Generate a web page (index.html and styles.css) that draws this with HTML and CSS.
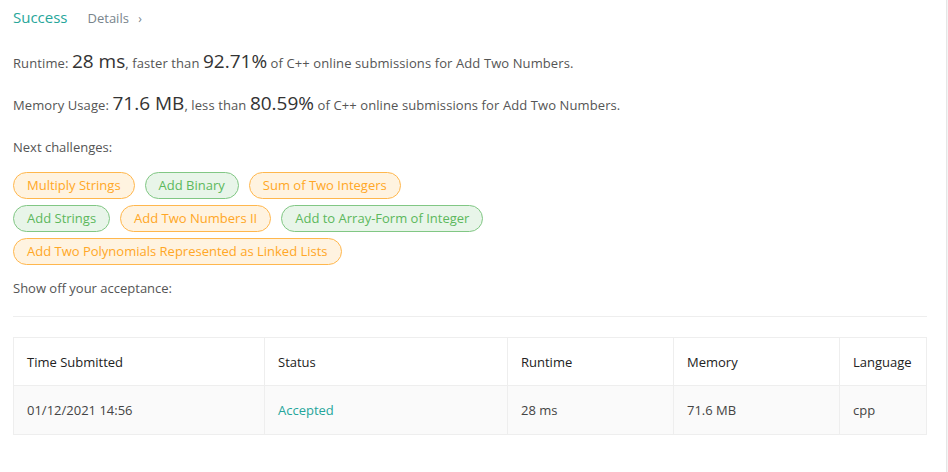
FILE: index.html
```html
<!DOCTYPE html>
<html>
<head>
<meta charset="utf-8">
<link rel="stylesheet" href="styles.css">
</head>
<body>
<div class="page">
  <div class="head">
    <span class="success">Success</span>
    <span class="details">Details <span class="chev">›</span></span>
  </div>
  <p class="stat">Runtime: <span class="big">28 ms</span>, faster than <span class="big">92.71%</span> of C++ online submissions for Add Two Numbers.</p>
  <p class="stat">Memory Usage: <span class="big">71.6 MB</span>, less than <span class="big">80.59%</span> of C++ online submissions for Add Two Numbers.</p>
  <p class="label">Next challenges:</p>
  <div class="tags">
    <span class="tag medium">Multiply Strings</span>
    <span class="tag easy">Add Binary</span>
    <span class="tag medium">Sum of Two Integers</span>
    <span class="tag easy">Add Strings</span>
    <span class="tag medium">Add Two Numbers II</span>
    <span class="tag easy">Add to Array-Form of Integer</span>
    <span class="tag medium">Add Two Polynomials Represented as Linked Lists</span>
  </div>
  <p class="label show">Show off your acceptance:</p>
  <hr class="rule">
  <table class="subs">
    <thead>
      <tr><th class="c1">Time Submitted</th><th class="c2">Status</th><th class="c3">Runtime</th><th class="c4">Memory</th><th class="c5">Language</th></tr>
    </thead>
    <tbody>
      <tr><td>01/12/2021 14:56</td><td class="acc">Accepted</td><td>28 ms</td><td>71.6 MB</td><td>cpp</td></tr>
    </tbody>
  </table>
</div>
</body>
</html>
```
FILE: styles.css
```css
html, body {
  margin: 0;
  padding: 0;
}
body {
  background: #f4f4f4;
  font-family: "Open Sans", "Noto Sans", sans-serif;
  font-size: 13px;
  color: #555;
}
.page {
  width: 947px;
  height: 472px;
  box-sizing: border-box;
  background: #fff;
  border-right: 1px solid #e6e6e6;
  padding: 7px 20px 0 13px;
}
.head {
  display: flex;
  align-items: baseline;
  gap: 20px;
  height: 24px;
}
.success {
  font-size: 15px;
  color: #26a69a;
}
.details {
  color: #78848c;
  font-size: 13px;
}
.chev {
  margin-left: 6px;
  font-size: 12px;
}
.stat {
  margin: 0;
  height: 42px;
  line-height: 30px;
  letter-spacing: 0.1px;
}
.stat:first-of-type {
  margin-top: 15px;
}
.big {
  font-size: 19px;
  color: #333;
  letter-spacing: 0;
}
.label {
  margin: 7px 0 0;
  line-height: 20px;
}
.tags {
  display: flex;
  flex-wrap: wrap;
  gap: 6px 10px;
  margin-top: 15px;
  width: 490px;
}
.tag {
  height: 27px;
  box-sizing: border-box;
  line-height: 25px;
  padding: 0 13px;
  border-radius: 14px;
  border: 1px solid;
  font-size: 13px;
}
.medium {
  color: #ffa726;
  background: #fff3e0;
  border-color: #ffb74d;
}
.easy {
  color: #5cb85c;
  background: #e8f5e9;
  border-color: #81c784;
}
.show {
  margin-top: 13px;
}
.rule {
  border: 0;
  border-top: 1px solid #eee;
  margin: 18px 0 20px;
  width: 914px;
}
.subs {
  border-collapse: collapse;
  width: 914px;
  table-layout: fixed;
}
.subs th, .subs td {
  box-sizing: border-box;
  border: 1px solid #eee;
  text-align: left;
  padding: 0 13px;
  font-weight: normal;
}
.subs th {
  height: 48px;
  color: #222;
}
.subs td {
  height: 49px;
  background: #fafafa;
  color: #444;
}
.c1 { width: 251px; }
.c2 { width: 243px; }
.c3 { width: 166px; }
.c4 { width: 166px; }
.acc { color: #26a69a !important; }
```
